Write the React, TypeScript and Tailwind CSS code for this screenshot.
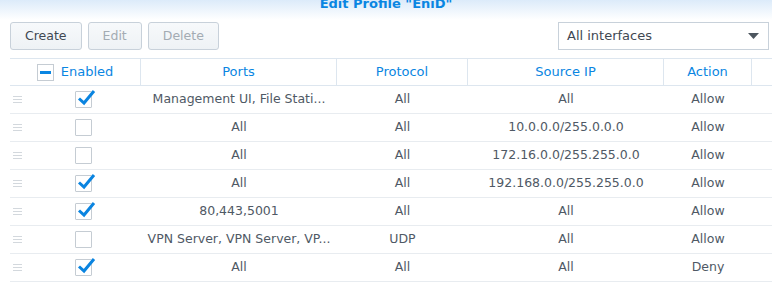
import { ReactNode } from "react";

const rows = [
  { on: true, ports: "Management UI, File Stati...", proto: "All", src: "All", action: "Allow" },
  { on: false, ports: "All", proto: "All", src: "10.0.0.0/255.0.0.0", action: "Allow" },
  { on: false, ports: "All", proto: "All", src: "172.16.0.0/255.255.0.0", action: "Allow" },
  { on: true, ports: "All", proto: "All", src: "192.168.0.0/255.255.0.0", action: "Allow" },
  { on: true, ports: "80,443,5001", proto: "All", src: "All", action: "Allow" },
  { on: false, ports: "VPN Server, VPN Server, VP...", proto: "UDP", src: "All", action: "Allow" },
  { on: true, ports: "All", proto: "All", src: "All", action: "Deny" },
];

const cols = "grid grid-cols-[131px_196px_131px_196px_88px_1fr]";

function Checkbox({ on }: { on: boolean }) {
  return (
    <div className="relative w-[17px] h-[17px] border border-[#c5ccd3] bg-white rounded-[1px]">
      {on && (
        <svg className="absolute -top-[3px] left-[1px]" width="19" height="17" viewBox="0 0 19 17">
          <path d="M2 9.5 L7 14 L17 2" fill="none" stroke="#0a84e0" strokeWidth="3" strokeLinejoin="miter" strokeLinecap="butt" />
        </svg>
      )}
    </div>
  );
}

function Grip() {
  return (
    <div className="flex flex-col gap-[2px] w-[9px]">
      <div className="h-px bg-[#d3d8dd]" />
      <div className="h-px bg-[#d3d8dd]" />
      <div className="h-px bg-[#d3d8dd]" />
    </div>
  );
}

function Btn({ children, disabled }: { children: ReactNode; disabled?: boolean }) {
  return (
    <button
      className={`h-[28px] px-[14px] border border-[#c8d1da] rounded-[3px] bg-gradient-to-b from-[#f7f9fb] to-[#eef2f5] text-[12.5px] ${
        disabled ? "text-[#a3abb3]" : "text-[#3f4852]"
      }`}
    >
      {children}
    </button>
  );
}

export default function App() {
  return (
    <div className="w-[772px] h-[290px] bg-white overflow-hidden font-['DejaVu_Sans',sans-serif] text-[12.5px] text-[#4f5965]">
      <div className="h-[20px] bg-gradient-to-b from-[#dcebfa] to-white flex justify-center overflow-hidden">
        <div className="-mt-[4px] text-[13px] font-bold text-[#0a86e2] leading-[16px]">Edit Profile "EniD"</div>
      </div>

      <div className="flex items-center pl-[10px] pr-[3px] mt-[2px] gap-[6px]">
        <Btn>Create</Btn>
        <Btn disabled>Edit</Btn>
        <Btn disabled>Delete</Btn>
        <div className="ml-auto w-[211px] h-[28px] border border-[#c8d1da] flex items-center pl-[8px] pr-[9px] text-[13px] text-[#3f4852]">
          <span>All interfaces</span>
          <svg className="ml-auto" width="11" height="6" viewBox="0 0 11 6">
            <path d="M0 0 H11 L5.5 6 Z" fill="#4d565f" />
          </svg>
        </div>
      </div>

      <div className="ml-[10px] mt-[8px]">
        <div className={`${cols} h-[28px] border-t border-b border-[#dde6ef] text-[#0a86e2] text-[13px]`}>
          <div className="flex items-center justify-center gap-[7px] border-r border-[#dde6ef]">
            <div className="w-[17px] h-[17px] border border-[#c5ccd3] bg-white flex items-center justify-center">
              <div className="w-[11px] h-[3px] bg-[#0a86e2]" />
            </div>
            <span>Enabled</span>
          </div>
          <div className="flex items-center justify-center border-r border-[#dde6ef]">Ports</div>
          <div className="flex items-center justify-center border-r border-[#dde6ef]">Protocol</div>
          <div className="flex items-center justify-center border-r border-[#dde6ef]">Source IP</div>
          <div className="flex items-center justify-center border-r border-[#dde6ef]">Action</div>
          <div />
        </div>
        {rows.map((r, i) => (
          <div key={i} className={`${cols} h-[28px] border-b border-[#e8ecf0]`}>
            <div className="flex items-center pl-[3px]">
              <Grip />
              <div className="ml-[53px]">
                <Checkbox on={r.on} />
              </div>
            </div>
            <div className="flex items-center justify-center">{r.ports}</div>
            <div className="flex items-center justify-center">{r.proto}</div>
            <div className="flex items-center justify-center">{r.src}</div>
            <div className="flex items-center justify-center">{r.action}</div>
            <div />
          </div>
        ))}
      </div>
    </div>
  );
}
